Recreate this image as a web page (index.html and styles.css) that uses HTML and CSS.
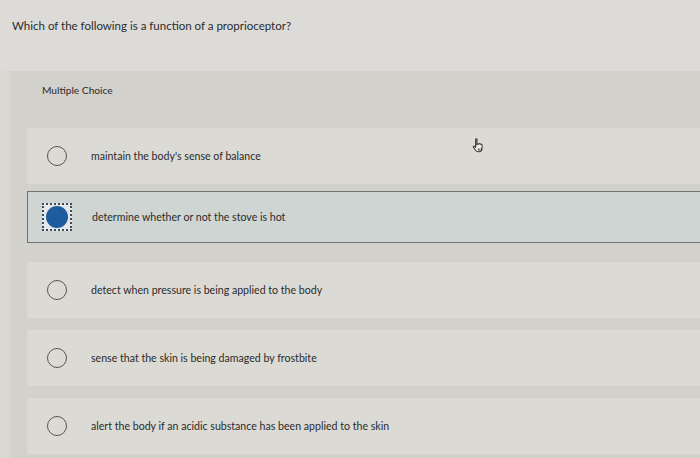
FILE: index.html
```html
<!DOCTYPE html>
<html>
<head>
<meta charset="utf-8">
<link rel="stylesheet" href="styles.css">
</head>
<body>
<div class="page">
  <div class="question">Which of the following is a function of a proprioceptor?</div>
  <div class="panel">
    <div class="mc-label">Multiple Choice</div>
    <div class="options">
      <div class="option">
        <span class="radio"></span>
        <span class="label">maintain the body's sense of balance</span>
        <svg class="cursor" width="18" height="18" viewBox="0 0 16 16">
          <path d="M5 2.2c0-.7 1.2-.7 1.2 0V7l.3-.6c.3-.6 1.2-.5 1.3.1l.3-.3c.4-.5 1.2-.3 1.3.3.5-.4 1.3-.1 1.3.6v3c0 1.6-1.2 3-2.8 3H7.2c-.9 0-1.6-.4-2.1-1.1L3 9.1c-.4-.6.4-1.3 1-.8L5 9.3z" fill="#f2f0ea" stroke="#3a3a3a" stroke-width="1" stroke-linejoin="round"/>
          <path d="M7.4 10.2v2M8.8 10.2v2M10.2 10.2v2" stroke="#3a3a3a" stroke-width=".8"/>
        </svg>
      </div>
      <div class="option selected">
        <span class="radio-focus"><span class="radio filled"></span></span>
        <span class="label">determine whether or not the stove is hot</span>
      </div>
      <div class="option">
        <span class="radio"></span>
        <span class="label">detect when pressure is being applied to the body</span>
      </div>
      <div class="option">
        <span class="radio"></span>
        <span class="label">sense that the skin is being damaged by frostbite</span>
      </div>
      <div class="option">
        <span class="radio"></span>
        <span class="label">alert the body if an acidic substance has been applied to the skin</span>
      </div>
    </div>
  </div>
</div>
</body>
</html>
```

FILE: styles.css
```css
html, body {
  margin: 0;
  padding: 0;
}
body {
  background: #d9d7d2;
  font-family: Lato, "Open Sans", Arial, sans-serif;
  color: #2b2b2b;
  width: 700px;
  height: 458px;
  overflow: hidden;
}
.page {
  display: flex;
  flex-direction: column;
  height: 458px;
}
.question {
  height: 71px;
  flex: none;
  box-sizing: border-box;
  padding: 19px 0 0 12px;
  font-size: 11.5px;
  background: #dddbd8;
}
.panel {
  flex: 1;
  margin-left: 10px;
  background: #d3d1cb;
  padding-top: 13px;
  overflow: hidden;
}
.mc-label {
  padding-left: 32px;
  font-size: 10.2px;
  height: 44px;
}
.options {
  display: flex;
  flex-direction: column;
  gap: 12px;
  margin-left: 17px;
}
.option {
  position: relative;
  height: 56px;
  flex: none;
  display: flex;
  align-items: center;
  background: #dcdad4;
  box-sizing: border-box;
  padding-left: 20px;
}
.option.selected {
  height: 52px;
  margin-top: -5px;
  margin-bottom: 7px;
  background: #cfd5d2;
  border: 1px solid #6f7270;
  border-right: none;
  padding-left: 14px;
}
.radio {
  width: 20px;
  height: 20px;
  border: 1.3px solid #555;
  border-radius: 50%;
  box-sizing: border-box;
  flex: none;
}
.radio.filled {
  width: 22px;
  height: 22px;
  border: none;
  background: #1e5c9e;
}
.radio-focus {
  width: 30px;
  height: 28px;
  box-sizing: border-box;
  border: 2px dotted #3d4a5a;
  display: flex;
  align-items: center;
  justify-content: center;
  flex: none;
  background: #e4e8ea;
}
.label {
  margin-left: 24px;
  font-size: 10.6px;
}
.selected .label {
  margin-left: 20px;
}
.cursor {
  position: absolute;
  left: 443px;
  top: 9px;
}
```
